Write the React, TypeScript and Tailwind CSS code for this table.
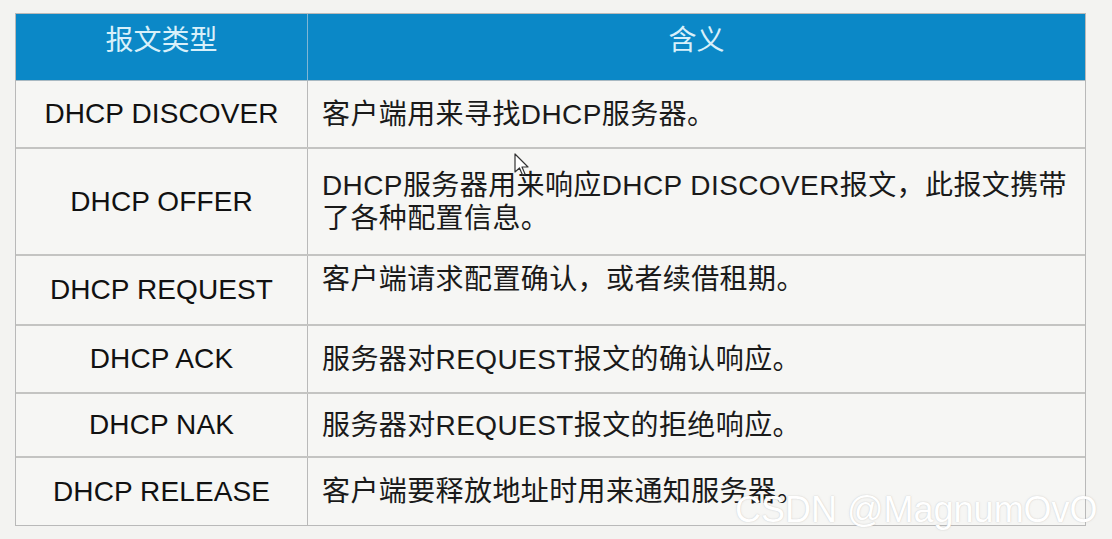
import React from "react";

const rows: { type: string; desc: React.ReactNode; h: string; align?: string }[] = [
  { type: "DHCP DISCOVER", desc: "客户端用来寻找DHCP服务器。", h: "h-[68px]" },
  {
    type: "DHCP OFFER",
    desc: (
      <>
        DHCP服务器用来响应DHCP DISCOVER报文，此报文携带
        <br />
        了各种配置信息。
      </>
    ),
    h: "h-[107px]",
  },
  { type: "DHCP REQUEST", desc: "客户端请求配置确认，或者续借租期。", h: "h-[70px]", align: "items-start pt-[7px]" },
  { type: "DHCP ACK", desc: "服务器对REQUEST报文的确认响应。", h: "h-[68px]" },
  { type: "DHCP NAK", desc: "服务器对REQUEST报文的拒绝响应。", h: "h-[64px]" },
  { type: "DHCP RELEASE", desc: "客户端要释放地址时用来通知服务器。", h: "h-[67px]" },
];

export default function App() {
  return (
    <div
      className="relative w-[1112px] h-[539px] bg-[#f3f3f1] pt-[13px] pl-[15px] overflow-hidden"
      style={{ fontFamily: '"Liberation Sans", Arial, "Noto Sans CJK SC", sans-serif' }}
    >
      <div className="w-[1071px] border border-[#b9b9b9] bg-[#f6f6f4]">
        <div className="flex h-[67px] bg-[#0b88c7] border-b border-[#a9b9c2]">
          <div className="w-[292px] border-r border-[#7fb6d4] flex items-center justify-center pb-[12px] text-[28px] text-[#d8f0fa]">
            报文类型
          </div>
          <div className="flex-1 flex items-center justify-center pb-[12px] text-[28px] text-[#d8f0fa]">
            含义
          </div>
        </div>
        {rows.map((r, i) => (
          <div
            key={i}
            className={`flex ${r.h} ${i < rows.length - 1 ? "border-b-2 border-[#c4c4c2]" : ""}`}
          >
            <div className="w-[292px] border-r border-[#b9b9b9] flex items-center justify-center text-[28px] text-[#111] tracking-[0.1px]">
              {r.type}
            </div>
            <div
              className={`flex-1 flex ${r.align ?? "items-center"} pl-[14px] text-[28px] leading-[33px] text-[#1a1a1a] tracking-[0.4px]`}
            >
              <div>{r.desc}</div>
            </div>
          </div>
        ))}
      </div>

      {/* mouse cursor */}
      <svg
        className="absolute left-[514px] top-[153px]"
        width="16"
        height="24"
        viewBox="0 0 16 24"
      >
        <path
          d="M1 1 L1 19 L5.5 15 L8.5 22 L11 21 L8 14 L14 14 Z"
          fill="#ffffff"
          stroke="#333"
          strokeWidth="1.2"
          strokeLinejoin="round"
        />
      </svg>

      {/* watermark */}
      <div
        className="absolute left-[735px] top-[491px] text-[36px] leading-[38px] text-white"
        style={{
          fontFamily: '"Liberation Sans", Arial, sans-serif',
          textShadow: "0 0 1.5px rgba(150,150,150,0.55)",
        }}
      >
        CSDN @MagnumOvO
      </div>
    </div>
  );
}
